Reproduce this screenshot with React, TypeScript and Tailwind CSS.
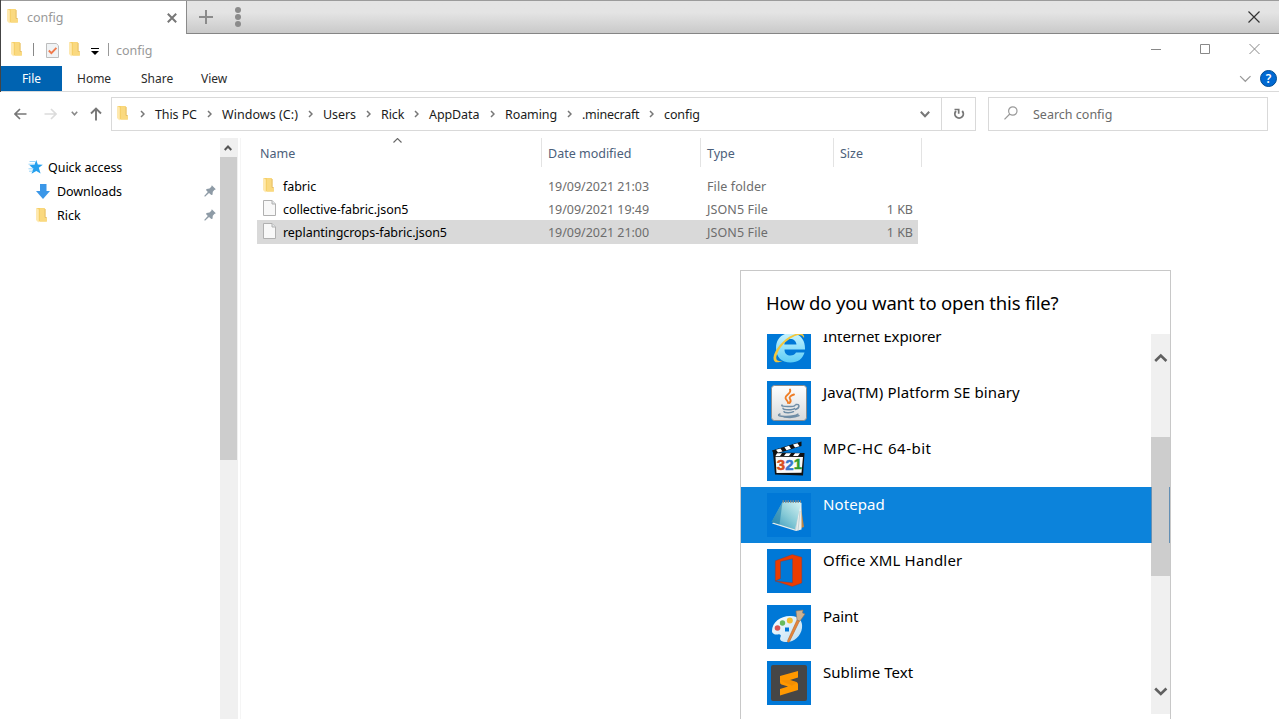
import React from "react";

const Folder = ({ className = "" }: { className?: string }) => (
  <svg width="12" height="16" viewBox="0 0 12 16" className={`shrink-0 ${className}`}>
    <path d="M.5 1H8l1.500 1.200V10l1.300 1.500v3H3L.5 13z" fill="#f6d069" />
    <path d="M4 1.200h5V10.500h1.800v4H4z" fill="#fad97f" />
    <path d="M9 2v8.500h1.800" fill="none" stroke="#dfb862" strokeWidth=".7" />
    <path d="M.5 1l2.300 1.500v13L.5 13.800z" fill="#ffe9ae" />
  </svg>
);

const FileIcon = ({ className = "" }: { className?: string }) => (
  <svg width="13" height="16" viewBox="0 0 13 16" className={`shrink-0 ${className}`}>
    <path d="M.5.5h8.6L12.5 4v11.5H.5z" fill="#f8f8f8" stroke="#b0b0b0" />
    <path d="M9 .5V4h3.5" fill="#e2e6e8" stroke="#b0b0b0" />
  </svg>
);

const Pin = ({ className = "" }: { className?: string }) => (
  <svg width="12" height="12" viewBox="0 0 12 12" className={`shrink-0 ${className}`}>
    <path d="M7.8.3L11.8 4.2 10.300 5 8.800 6.800 8.500 9.700 7.300 10 5 8 1 11.8.200 11 3.800 7 2 5 2.600 3.900 5.500 3.500 7.300 1.800z" fill="#8e9ba6" />
  </svg>
);

const Crumb = ({ width, label, track = "" }: { width: string; label: string; track?: string }) => (
  <div className={`flex shrink-0 items-center ${width}`}>
    <svg width="5" height="8" viewBox="0 0 5 8" className="mr-[10px] shrink-0" fill="none" stroke="#777" strokeWidth="1.5">
      <path d="M1 1l3 3-3 3" />
    </svg>
    <span className={track || "tracking-[-0.1px]"}>{label}</span>
  </div>
);

const Chevron = ({ up = false, size = 14, color = "#606060", width = 2 }: { up?: boolean; size?: number; color?: string; width?: number }) => (
  <svg width={size} height={size} viewBox="0 0 14 14" fill="none" stroke={color} strokeWidth={width}>
    <path d={up ? "M1.2 10L6.800 4.5l5.6 5.5" : "M1.2 4.500L6.800 10l5.600-5.500"} />
  </svg>
);

const TabStrip = () => (
  <div className="flex h-[34px] shrink-0 border-t border-[#9b9b9b] bg-linear-to-b from-[#e4e4e4] from-35% to-[#c8c8c8]">
    <div className="flex w-[186px] shrink-0 items-center border-r border-r-[#8b8b8b] bg-white">
      <Folder className="-mt-1 ml-[6px]" />
      <span className="ml-2 text-[#999]">config</span>
      <svg className="mr-[9px] ml-auto" width="10" height="10" viewBox="0 0 10 10" stroke="#777" strokeWidth="2">
        <path d="M.8.8l8.4 8.4M9.2.8L.8 9.2" />
      </svg>
    </div>
    <div className="flex flex-1 items-center border-b border-[#858585]">
      <svg className="ml-3" width="14" height="14" viewBox="0 0 14 14" stroke="#8b8b8b" strokeWidth="2">
        <path d="M7 0v14M0 7h14" />
      </svg>
      <svg className="ml-[22px]" width="6" height="20" viewBox="0 0 6 20" fill="#8b8b8b">
        <circle cx="3" cy="3" r="3" />
        <circle cx="3" cy="10" r="3" />
        <circle cx="3" cy="17" r="3" />
      </svg>
      <svg className="mr-[19px] ml-auto -mt-px" width="12" height="12" viewBox="0 0 12 12" stroke="#333" strokeWidth="1.2">
        <path d="M.5.5l11 11M11.5.5l-11 11" />
      </svg>
    </div>
  </div>
);

const TitleBar = () => (
  <div className="flex h-8 shrink-0 items-center pl-[10px]">
    <Folder className="-mt-0.5" />
    <div className="-mt-px ml-[10px] h-[13px] w-px bg-[#888]" />
    <svg className="ml-3" width="13" height="15" viewBox="0 0 13 15">
      <path d="M.5.5h9.8l2.2 2.2v11.8H.5z" fill="#f0f3f5" stroke="#bdbdbd" />
      <path d="M2.800 7.500l2.600 2.600 5-5.200" fill="none" stroke="#f07a4c" strokeWidth="1.900" />
    </svg>
    <Folder className="-mt-0.5 ml-[10px]" />
    <svg className="mt-0.5 ml-[10px]" width="8" height="7" viewBox="0 0 8 7" fill="#000">
      <path d="M0 0h8v1H0zM0 3h8L4 7z" />
    </svg>
    <div className="-mt-px ml-[9px] h-[13px] w-px bg-[#999]" />
    <span className="ml-[7px] text-[#999]">config</span>
    <div className="-mt-0.5 mr-[19px] ml-auto flex items-center gap-[39px]">
      <svg width="10" height="10" viewBox="0 0 10 10" fill="#888"><path d="M0 5h10v1H0z" /></svg>
      <svg width="10" height="10" viewBox="0 0 10 10" fill="none" stroke="#888"><path d="M.5.5h9v9h-9z" /></svg>
      <svg width="11" height="10" viewBox="0 0 11 10" stroke="#888"><path d="M.5 0l10 10M10.5 0l-10 10" /></svg>
    </div>
  </div>
);

const Ribbon = () => (
  <div className="flex h-[26px] shrink-0 items-center border-b border-[#dadada] pr-[2px] text-[12px] text-[#2b2b2b]">
    <div className="flex h-[25px] w-[61px] items-center justify-center bg-[#0063b1] text-white">File</div>
    <span className="ml-[15px] w-16">Home</span>
    <span className="w-[60px]">Share</span>
    <span>View</span>
    <div className="ml-auto flex items-center gap-[8px]">
      <Chevron size={13} color="#999" width={1.3} />
      <div className="flex h-[17px] w-[17px] items-center justify-center rounded-full border border-[#004c92] bg-[#0069d2] text-[12px] leading-none font-semibold text-white">?</div>
    </div>
  </div>
);

const AddressBar = () => (
  <div className="mt-[5px] flex h-[34px] shrink-0 items-center pr-[11px]">
    <svg className="ml-[14px]" width="13" height="12" viewBox="0 0 13 12" fill="none" stroke="#777" strokeWidth="1.7">
      <path d="M12.5 6H1.2M6 1L1 6l5 5" />
    </svg>
    <svg className="ml-[17px]" width="13" height="12" viewBox="0 0 13 12" fill="none" stroke="#dcdcdc" strokeWidth="1.7">
      <path d="M.5 6h11.3M7 1l5 5-5 5" />
    </svg>
    <svg className="ml-[14px] -mt-0.5" width="7" height="5" viewBox="0 0 7 5" fill="none" stroke="#888" strokeWidth="1.6">
      <path d="M.8.8l2.7 3 2.7-3" />
    </svg>
    <svg className="ml-[12px]" width="12" height="14" viewBox="0 0 12 14" fill="none" stroke="#777" strokeWidth="1.9">
      <path d="M6 13.5V2M1 6.500l5-5 5 5" />
    </svg>
    <div className="ml-[9px] flex h-[34px] w-[865px] items-center border border-[#d9d9d9] text-[#1b1b1b]">
      <Folder className="-mt-[3px] ml-[5px]" />
      <div className="ml-[11px] flex">
        <Crumb width="w-[67px]" label="This PC" />
        <Crumb width="w-[101px]" label="Windows (C:)" track="tracking-[0.05px]" />
        <Crumb width="w-[58px]" label="Users" />
        <Crumb width="w-[48px]" label="Rick" />
        <Crumb width="w-[76px]" label="AppData" />
        <Crumb width="w-[77px]" label="Roaming" />
        <Crumb width="w-[82px]" label=".minecraft" track="tracking-[-0.25px]" />
        <Crumb width="w-[60px]" label="config" />
      </div>
      <svg className="mr-[11px] ml-auto" width="10" height="7" viewBox="0 0 10 7" fill="none" stroke="#777" strokeWidth="2">
        <path d="M.8.8L5 5.2 9.2.8" />
      </svg>
      <div className="flex h-full w-[34px] items-center justify-center border-l border-[#d9d9d9]">
        <svg width="12" height="12" viewBox="0 0 12 12" fill="none" stroke="#777" strokeWidth="1.9">
          <path d="M9.200 3A4.200 4.200 0 1 1 3 3" />
          <path d="M1.500 1.500h4.200v4.200" strokeWidth="1.700" />
        </svg>
      </div>
    </div>
    <div className="ml-3 flex h-[34px] w-[280px] items-center border border-[#d9d9d9] text-[#6b6b6b]">
      <svg className="-mt-0.5 ml-[15px]" width="14" height="14" viewBox="0 0 14 14" fill="none" stroke="#999" strokeWidth="1.200">
        <circle cx="8.800" cy="5" r="4.200" />
        <path d="M5.800 8L.5 13.400" />
      </svg>
      <span className="ml-[15px]">Search config</span>
    </div>
  </div>
);

const Sidebar = () => (
  <div className="flex w-[240px] shrink-0 border-r border-[#f5f5f5]">
    <div className="w-[219px] pt-[17px] text-black">
      <div className="flex h-6 items-center pl-[27px]">
        <svg width="15" height="14" viewBox="0 0 15 14">
          <path d="M8.300 0l1.500 4.500 5 .2-4 3.100 1.800 5.800-4.300-2.700-4.800 2.900 1.700-5.400-3.800-3.200 5-.5z" fill="#25a0ee" />
          <path d="M1.500 1.500h6M.5 4.200h6M.5 8.800h5M1 11.200h4" stroke="#8fd0f7" strokeWidth=".9" />
        </svg>
        <span className="ml-[5px] tracking-[-0.03px]">Quick access</span>
      </div>
      <div className="flex h-6 items-center pl-[35px]">
        <svg width="14" height="15" viewBox="0 0 14 15"><path d="M4 0h6.500v7H14l-7 8-7-8h4z" fill="#3b97e8" /></svg>
        <span className="ml-[7px] tracking-[-0.05px]">Downloads</span>
        <Pin className="mr-[4px] ml-auto" />
      </div>
      <div className="flex h-6 items-center pl-[35px]">
        <Folder />
        <span className="ml-[9px]">Rick</span>
        <Pin className="mr-[4px] ml-auto" />
      </div>
    </div>
    <div className="flex w-[18px] flex-col bg-[#f0f0f0]">
      <div className="flex h-[19px] items-center justify-center pr-0.5">
        <svg width="8" height="6" viewBox="0 0 8 6" fill="none" stroke="#555" strokeWidth="2"><path d="M.7 5L4 1.500 7.300 5" /></svg>
      </div>
      <div className="h-[303px] w-[17px] bg-[#cdcdcd]" />
    </div>
  </div>
);

const files = [
  { name: "fabric", date: "19/09/2021 21:03", type: "File folder", size: "", row: "h-[23px] pt-px", folder: true },
  { name: "collective-fabric.json5", date: "19/09/2021 19:49", type: "JSON5 File", size: "1 KB", row: "h-[23px] pt-px", folder: false },
  { name: "replantingcrops-fabric.json5", date: "19/09/2021 21:00", type: "JSON5 File", size: "1 KB", row: "h-6 bg-[#d9d9d9]", folder: false },
];

const FileList = () => (
  <div className="flex-1">
    <div className="flex h-[29px] items-center text-[#4c607a]">
      <div className="flex h-full w-[301px] items-center border-r border-[#e3e3e3] pl-[19px]">
        <span className="w-[133px] pt-0.5">Name</span>
        <svg className="self-start" width="9" height="5" viewBox="0 0 9 5" fill="none" stroke="#666" strokeWidth="1.1"><path d="M.5 4.500l4-4 4 4" /></svg>
      </div>
      <div className="flex h-full w-[159px] items-center border-r border-[#e3e3e3] pt-0.5 pl-[6px]">Date modified</div>
      <div className="flex h-full w-[133px] items-center border-r border-[#e3e3e3] pt-0.5 pl-[6px]">Type</div>
      <div className="flex h-full w-[88px] items-center border-r border-[#e3e3e3] pt-0.5 pl-[6px]">Size</div>
    </div>
    <div className="mt-[7px] ml-4 w-[661px]">
      {files.map((f) => (
        <div key={f.name} className={`flex items-center text-[#6d6d6d] ${f.row}`}>
          <div className="flex w-[291px] items-center pl-[6px] text-black">
            {f.folder ? <Folder className="-mt-0.5 mr-2" /> : <FileIcon className="-mt-0.5 mr-[7px]" />}
            <span className="tracking-[-0.05px]">{f.name}</span>
          </div>
          <div className="w-[159px] tracking-[-0.04px]">{f.date}</div>
          <div className="flex-1 tracking-[0.1px]">{f.type}</div>
          <div className="pr-[5px]">{f.size}</div>
        </div>
      ))}
    </div>
  </div>
);

const Explorer = () => (
  <svg width="44" height="44" viewBox="0 0 44 44">
    <defs>
      <linearGradient id="ie" x1="0" y1="0" x2="0" y2="1"><stop stopColor="#c9f4ff" /><stop offset="1" stopColor="#5ccdf6" /></linearGradient>
    </defs>
    <path d="M38 24.500H17.500c0 4 2.500 6 6 6 2.600 0 4.500-1 5.500-3h8.500C35.500 34 31 37.500 23.500 37.500 14.500 37.500 9 32 9 23S15 8 23.500 8 38.500 14 38 24.500zM29.500 19.500c-.4-3.500-2.800-5.500-6-5.500-3.500 0-5.800 2-6.200 5.500z" fill="url(#ie)" />
    <path d="M37 13c1-5-5-6-11-3C16 14 7 26 6.500 32.500c-.2 5 3.500 6.200 9 3.300-5 1.200-7-.8-6-4.800 2-7.500 9-15.500 16.500-19 6-3 9-2.500 11 1z" fill="#f3c63b" />
  </svg>
);

const Java = () => (
  <svg width="44" height="44" viewBox="0 0 44 44">
    <defs>
      <linearGradient id="jv" x1="0" y1="0" x2="0" y2="1"><stop stopColor="#fff" /><stop offset="1" stopColor="#d9dadb" /></linearGradient>
    </defs>
    <rect x="4.500" y="4.500" width="35" height="35" rx="3" fill="url(#jv)" stroke="#8c8c8c" />
    <g fill="none" strokeLinecap="round">
      <path d="M23 8.500c2 4-5 5.500-4.500 8.500.2 2 3 3 2.500 5M27 13.500c-3 1-5.500 2.500-4 4.500s.5 3-.5 4" stroke="#ee7d26" strokeWidth="1.900" />
      <path d="M15 24c-2 2 12 2 13 .3M16 27.300c0 2 10 2 11.500.3M17 30.500c0 1.500 7 1.700 9.500.2M29 23.500c4-.8 4 3.500-.5 5M13 33c-7 3 14 3.500 18 .2M17 36c5 .6 12 .2 15-1.300" stroke="#6f8da6" strokeWidth="1.500" />
    </g>
  </svg>
);

const Mpc = () => (
  <svg width="44" height="44" viewBox="0 0 44 44">
    <path d="M6 15.500l2 22L36 38.500 37.500 16z" fill="#111" />
    <path d="M8.500 19.800L36 20l-1.500 15.700-25 .3z" fill="#fafafa" />
    <path d="M5 13.500L34.500 4.500v4.500L7 17.500z" fill="#111" />
    <path d="M9 12.700l4.500-1.300 2 3-4.500 1.200zM17.500 10.200l4.500-1.400 2 3-4.500 1.400zM26 7.600l4.500-1.400 2 3-4.500 1.200zM10 16.300h5l-2 2.700H8.500zM19 16.300h5l-2 2.700h-5zM28 16.300h5l-2 2.700h-5z" fill="#fff" />
    <g fontFamily="Liberation Sans, sans-serif" fontWeight="700" fontSize="15">
      <text x="9.800" y="33" fill="#d94f20" stroke="#d94f20" strokeWidth=".5">3</text>
      <text x="18.300" y="32.500" fill="#3977cc" stroke="#3977cc" strokeWidth=".5">2</text>
      <text x="26.800" y="32" fill="#2f9b2c" stroke="#2f9b2c" strokeWidth=".5">1</text>
    </g>
  </svg>
);

const Notepad = () => (
  <svg width="44" height="44" viewBox="0 0 44 44">
    <defs>
      <linearGradient id="np" x1="0" y1="1" x2="1" y2="0"><stop stopColor="#2e91b8" /><stop offset=".5" stopColor="#85c9d6" /><stop offset="1" stopColor="#d8f3f3" /></linearGradient>
    </defs>
    <path d="M33.500 11l3.500 23-3 1z" fill="#bd8648" />
    <path d="M5 30.500l24 7.500 5.500-1.500L34.500 10h-2z" fill="#e9efee" />
    <path d="M31.500 16l-3 21.500M33 18l-2 20" stroke="#aebfc2" strokeWidth=".6" />
    <path d="M15.500 9H34.200L28 36.500 4.500 29z" fill="url(#np)" />
    <path d="M15.500 9L4.500 29l8 2.500z" fill="#1879a8" opacity=".55" />
    <path d="M15.500 8.500H34" stroke="#7a888d" strokeWidth="2.500" strokeDasharray="1.500 1" />
  </svg>
);

const Office = () => (
  <svg width="44" height="44" viewBox="0 0 44 44" fill="#eb3c00" stroke="#7f3940" strokeWidth=".4">
    <path d="M8.300 11.800L25.300 5.500 34.800 8.300V34L25.300 37.500 8.300 32l17.200 1.800V9.800L13.500 12.500v17L8.300 32z" />
  </svg>
);

const Paint = () => (
  <svg width="44" height="44" viewBox="0 0 44 44">
    <defs>
      <linearGradient id="pt" x1="0" y1="0" x2="1" y2="1"><stop stopColor="#fff" /><stop offset="1" stopColor="#b9ddf2" /></linearGradient>
    </defs>
    <path fillRule="evenodd" d="M5 26C5 17 14 10.500 24 11c8 .4 12 5 11 12-1 8-8 14-15 14-5.500 0-8-2-6.500-5 1-2-.5-3-2.500-2.500S5 29 5 26zm13-3.500v4h4v-4z" fill="url(#pt)" />
    <circle cx="10.500" cy="23" r="2.800" fill="#d95555" />
    <circle cx="15.500" cy="18" r="2.700" fill="#68bb5c" />
    <circle cx="22.800" cy="15.500" r="3" fill="#f2be35" />
    <path d="M30 15l2.500 1L22.500 36.500c-1 1.500-2.500.5-1.800-1z" fill="#e4863b" stroke="#b86527" strokeWidth=".6" />
    <path d="M29 6l7-1-.5 3 2.500 1-5 7-3-1z" fill="#cdb292" stroke="#91745d" strokeWidth=".6" />
  </svg>
);

const Sublime = () => (
  <svg width="44" height="44" viewBox="0 0 44 44">
    <rect x="4" y="4" width="36" height="36" rx="2" fill="#464646" />
    <path d="M13 15L31 10v6.500l-8 2.600 6.500 2q1.500.5 1.500 2.500V29L13 34.500V28l8-2.500-6.500-2Q13 23 13 21z" fill="#ff9800" />
    <path d="M13.500 19.500L23 19.100l7 2.300-5 3.300z" fill="#e58507" opacity=".45" />
  </svg>
);

const apps = [
  { name: "Internet Explorer", icon: <Explorer />, track: "tracking-[-0.12px]" },
  { name: "Java(TM) Platform SE binary", icon: <Java />, track: "tracking-[0.12px]" },
  { name: "MPC-HC 64-bit", icon: <Mpc />, track: "tracking-[0.5px]" },
  { name: "Notepad", icon: <Notepad />, track: "tracking-[0.1px]", selected: true },
  { name: "Office XML Handler", icon: <Office />, track: "tracking-[0.18px]" },
  { name: "Paint", icon: <Paint />, track: "tracking-[-0.15px]" },
  { name: "Sublime Text", icon: <Sublime />, track: "tracking-[0.05px]" },
];

const OpenWithDialog = () => (
  <div className="absolute top-[270px] left-[740px] flex h-[460px] w-[431px] flex-col border border-[#c8c8c8] bg-white text-black">
    <h1 className="h-[63px] shrink-0 pt-[19px] pl-[25px] text-[18.5px] leading-[25px] font-normal tracking-[-0.19px] whitespace-nowrap">How do you want to open this file?</h1>
    <div className="flex h-[380px] shrink-0 overflow-hidden">
      <div className="-mt-[15px] w-[410px]">
        {apps.map((a) => (
          <div key={a.name} className={`flex h-14 pt-[6px] pl-[26px] ${a.selected ? "bg-[#0c83db] text-white" : ""}`}>
            <div className="h-11 w-11 bg-[#0078d7]">{a.icon}</div>
            <span className={`ml-3 text-[15px] leading-[22px] whitespace-nowrap ${a.track}`}>{a.name}</span>
          </div>
        ))}
      </div>
      <div className="flex w-[19px] flex-col items-center bg-[#f0f0f0]">
        <div className="flex h-[103px] items-start pt-[17px]"><Chevron up color="#606060" width={2.6} /></div>
        <div className="flex h-[139px] w-full flex-col bg-[#cdcdcd] pt-[50px]">
          <div className="h-14 border-x border-[#638fb4]" />
        </div>
        <div className="mt-auto pb-[16px]"><Chevron color="#606060" width={2.6} /></div>
      </div>
    </div>
  </div>
);

export default function App() {
  return (
    <div className="relative flex h-[719px] w-[1279px] flex-col overflow-hidden bg-white font-['Noto_Sans',sans-serif] text-[12.5px] leading-[17px]">
      <div className="shrink-0 border-l border-[#444]">
        <TabStrip />
        <TitleBar />
        <Ribbon />
      </div>
      <AddressBar />
      <div className="mt-[7px] flex flex-1 pl-px">
        <Sidebar />
        <FileList />
      </div>
      <OpenWithDialog />
    </div>
  );
}
